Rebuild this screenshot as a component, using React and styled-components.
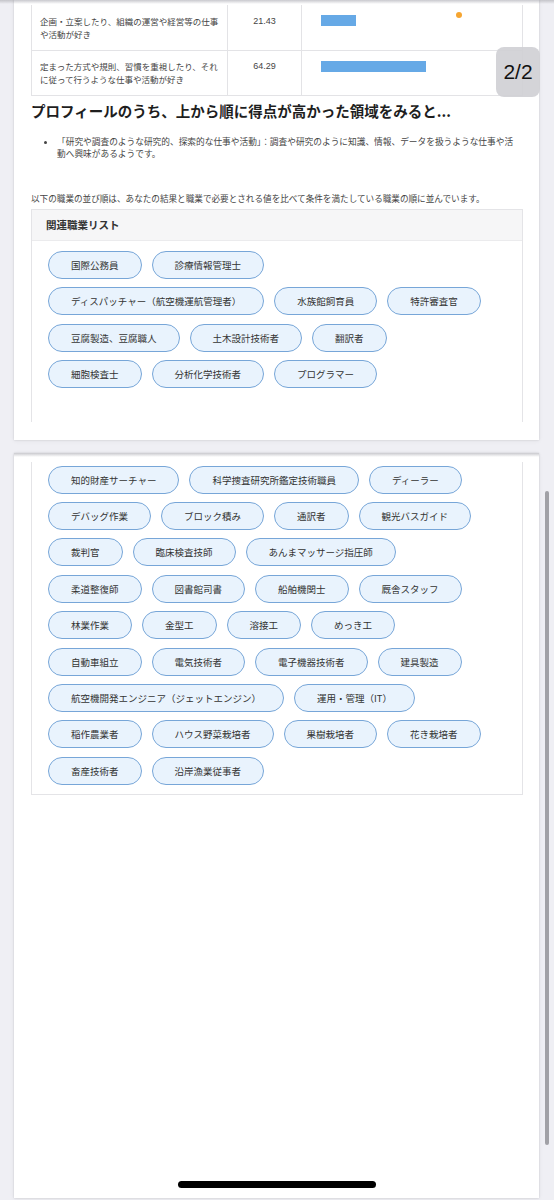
import React from 'react';
import styled, { createGlobalStyle } from 'styled-components';

const GlobalStyle = createGlobalStyle`
  html, body {
    margin: 0;
    padding: 0;
    background: #efeff4;
  }
  body {
    font-family: "Noto Sans CJK JP", "Noto Sans", sans-serif;
    color: #333;
  }
`;

const scores = [
  {
    label: '企画・立案したり、組織の運営や経営等の仕事や活動が好き',
    value: 21.43,
    mark: 135,
  },
  {
    label: '定まった方式や規則、習慣を重視したり、それに従って行うような仕事や活動が好き',
    value: 64.29,
  },
];

const jobsFirst = [
  '国際公務員',
  '診療情報管理士',
  'ディスパッチャー（航空機運航管理者）',
  '水族館飼育員',
  '特許審査官',
  '豆腐製造、豆腐職人',
  '土木設計技術者',
  '翻訳者',
  '細胞検査士',
  '分析化学技術者',
  'プログラマー',
];

const jobsSecond = [
  '知的財産サーチャー',
  '科学捜査研究所鑑定技術職員',
  'ディーラー',
  'デバッグ作業',
  'ブロック積み',
  '通訳者',
  '観光バスガイド',
  '裁判官',
  '臨床検査技師',
  'あんまマッサージ指圧師',
  '柔道整復師',
  '図書館司書',
  '船舶機関士',
  '厩舎スタッフ',
  '林業作業',
  '金型工',
  '溶接工',
  'めっき工',
  '自動車組立',
  '電気技術者',
  '電子機器技術者',
  '建具製造',
  '航空機開発エンジニア（ジェットエンジン）',
  '運用・管理（IT）',
  '稲作農業者',
  'ハウス野菜栽培者',
  '果樹栽培者',
  '花き栽培者',
  '畜産技術者',
  '沿岸漁業従事者',
];

const App = () => {
  return (
    <Page>
      <GlobalStyle />
      <Panel $top={5} $bottom={18}>
        <ScoreTable>
          <colgroup>
            <col style={{ width: 196 }} />
            <col style={{ width: 74 }} />
            <col />
          </colgroup>
          <tbody>
            {scores.map((s) => (
              <tr key={s.label}>
                <LabelCell>{s.label}</LabelCell>
                <NumCell>{s.value}</NumCell>
                <BarCell>
                  <Track>
                    <Bar style={{ width: s.value * 1.63 }} />
                    {s.mark && <Dot style={{ left: s.mark }} />}
                  </Track>
                </BarCell>
              </tr>
            ))}
          </tbody>
        </ScoreTable>

        <Heading>プロフィールのうち、上から順に得点が高かった領域をみると...</Heading>
        <Bullets>
          <li>
            「研究や調査のような研究的、探索的な仕事や活動」：調査や研究のように知識、情報、データを扱うような仕事や活動へ興味があるようです。
          </li>
        </Bullets>
        <Lead>
          以下の職業の並び順は、あなたの結果と職業で必要とされる値を比べて条件を満たしている職業の順に並んでいます。
        </Lead>

        <Card $open='bottom'>
          <CardHeader>関連職業リスト</CardHeader>
          <PillArea $top={10} $bottom={25}>
            {jobsFirst.map((j) => (
              <Pill key={j}>{j}</Pill>
            ))}
          </PillArea>
        </Card>
      </Panel>

      <Panel $top={9} $grow>
        <Card $open='top'>
          <PillArea $top={4} $bottom={1.4}>
            {jobsSecond.map((j) => (
              <Pill key={j}>{j}</Pill>
            ))}
          </PillArea>
        </Card>
      </Panel>

      <PageBadge>2/2</PageBadge>
      <ScrollThumb />
      <HomeIndicator />
    </Page>
  );
};

const Page = styled.div`
  position: relative;
  width: 554px;
  min-height: 1200px;
  box-sizing: border-box;
  padding: 0 15px 2px 14px;
  display: flex;
  flex-direction: column;
  gap: 13px;
  background: linear-gradient(#c4c4c9, #efeff4 4px) no-repeat top / 100% 4px,
    #efeff4;
`;

const Panel = styled.div`
  background: linear-gradient(#c9c9ce, rgba(255, 255, 255, 0) 4px) no-repeat
      top / 100% 4px,
    #fff;
  box-shadow: 0 0 2px rgba(0, 0, 0, 0.14), 0 1px 5px rgba(0, 0, 0, 0.05);
  padding: ${(p) => p.$top}px 16px ${(p) => p.$bottom || 0}px 17px;
  flex: ${(p) => (p.$grow ? 1 : 'none')};
`;

const ScoreTable = styled.table`
  width: 100%;
  table-layout: fixed;
  border-collapse: collapse;
  font-size: 8.5px;
  line-height: 13px;
  color: #444;

  tr:first-child td {
    border-top: none;
    padding-top: 10px;
  }
`;

const LabelCell = styled.td`
  border: 1px solid #e3e3e6;
  padding: 9px 8px;
  vertical-align: top;
`;

const NumCell = styled(LabelCell)`
  text-align: center;
  font-family: "Liberation Sans", "Noto Sans CJK JP", sans-serif;
  font-size: 9px;
`;

const BarCell = styled(LabelCell)`
  && {
    padding: 10px 19px 0;
  }
`;

const Track = styled.div`
  position: relative;
  height: 10.5px;
`;

const Bar = styled.div`
  height: 100%;
  background: #66a9e6;
`;

const Dot = styled.span`
  position: absolute;
  top: -3px;
  width: 6px;
  height: 6px;
  border-radius: 50%;
  background: #f6a531;
`;

const Heading = styled.h2`
  margin: 5px 0 0;
  font-size: 14.5px;
  line-height: 20px;
  font-weight: 700;
  color: #1e1e1e;
`;

const Bullets = styled.ul`
  margin: 15px 0 0;
  padding: 0 4px 0 26px;
  font-size: 8.7px;
  line-height: 11.5px;
  color: #444;
`;

const Lead = styled.p`
  margin: 33px 0 0;
  font-size: 8.6px;
  line-height: 12px;
  color: #444;
`;

const Card = styled.div`
  margin-top: 5px;
  border: 1px solid #e4e4e7;
  ${(p) => (p.$open === 'bottom' ? 'border-bottom: none;' : '')}
  ${(p) => (p.$open === 'top' ? 'border-top: none; margin-top: 0;' : '')}
`;

const CardHeader = styled.div`
  height: 30px;
  padding: 0 14px;
  background: #f6f6f7;
  border-bottom: 1px solid #ebebed;
  font-size: 10.5px;
  line-height: 30px;
  font-weight: 700;
  color: #333;
`;

const PillArea = styled.div`
  display: flex;
  flex-wrap: wrap;
  padding: ${(p) => p.$top}px 25px ${(p) => p.$bottom}px 16px;
`;

const Pill = styled.span`
  box-sizing: border-box;
  height: 28px;
  margin: 0 10px 8.4px 0;
  padding: 0 22px;
  border: 1px solid #77a6d8;
  border-radius: 14px;
  background: #e9f3fd;
  font-size: 9.5px;
  line-height: 26px;
  color: #333;
  white-space: nowrap;
`;

const PageBadge = styled.div`
  position: absolute;
  left: 496px;
  top: 47px;
  width: 44px;
  height: 50px;
  border-radius: 8px;
  background: rgba(208, 208, 213, 0.92);
  display: flex;
  align-items: center;
  justify-content: center;
  font-family: "Liberation Sans", sans-serif;
  font-size: 21px;
  color: #111;
`;

const ScrollThumb = styled.div`
  position: absolute;
  left: 545px;
  top: 491px;
  width: 3.5px;
  height: 654px;
  border-radius: 2px;
  background: #a1a1a6;
`;

const HomeIndicator = styled.div`
  position: absolute;
  left: 178px;
  top: 1181px;
  width: 198px;
  height: 7px;
  border-radius: 4px;
  background: #000;
`;

export default App;
